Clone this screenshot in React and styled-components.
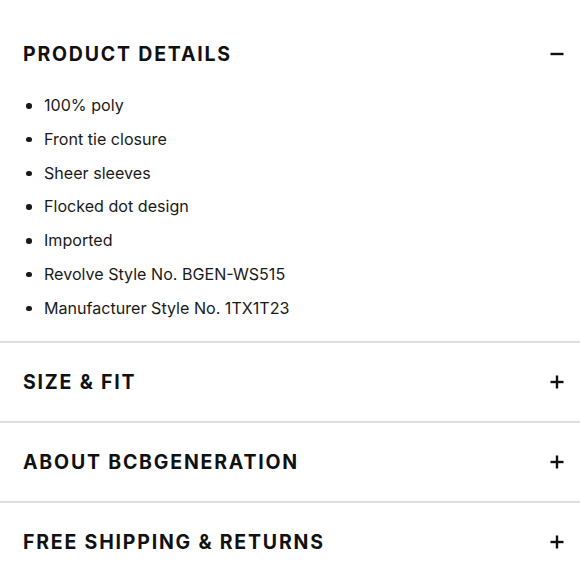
import React from "react";
import styled, { createGlobalStyle } from "styled-components";

const GlobalStyle = createGlobalStyle`
  body {
    margin: 0;
    background: #fff;
    font-family: "Inter", "Noto Sans", sans-serif;
    color: #111;
  }
`;

const Page = styled.div`
  width: 580px;
  padding-top: 20px;
`;

const Section = styled.section`
  border-top: ${(p) => (p.$first ? "none" : "2px solid #dedede")};
`;

const Header = styled.div`
  height: ${(p) => (p.$open ? "68px" : "78px")};
  display: flex;
  align-items: center;
  justify-content: space-between;
  padding: 0 16px 0 23px;
`;

const Title = styled.h2`
  margin: 0;
  font-size: 19.5px;
  font-weight: 700;
  letter-spacing: 1.8px;
  text-transform: uppercase;
`;

const List = styled.ul`
  list-style: none;
  margin: 0;
  padding: 0 0 16px 44px;
`;

const Item = styled.li`
  position: relative;
  height: 33.8px;
  line-height: 34px;
  font-size: 16.1px;
  color: #1a1a1a;

  &::before {
    content: "";
    position: absolute;
    left: -18px;
    top: 15px;
    width: 5.5px;
    height: 5.5px;
    border-radius: 50%;
    background: #1a1a1a;
  }
`;

const Toggle = ({ open }) => (
  <svg width="14" height="14" viewBox="0 0 14 14">
    <path d="M0.5 7h13" stroke="#111" strokeWidth="2.4" />
    {!open && <path d="M7 0.5v13" stroke="#111" strokeWidth="2.4" />}
  </svg>
);

const details = [
  "100% poly",
  "Front tie closure",
  "Sheer sleeves",
  "Flocked dot design",
  "Imported",
  "Revolve Style No. BGEN-WS515",
  "Manufacturer Style No. 1TX1T23",
];

const sections = ["Size & Fit", "About BCBGENERATION", "Free Shipping & Returns"];

export default function App() {
  return (
    <Page>
      <GlobalStyle />
      <Section $first>
        <Header $open>
          <Title>Product Details</Title>
          <Toggle open />
        </Header>
        <List>
          {details.map((d) => (
            <Item key={d}>{d}</Item>
          ))}
        </List>
      </Section>
      {sections.map((s) => (
        <Section key={s}>
          <Header>
            <Title>{s}</Title>
            <Toggle />
          </Header>
        </Section>
      ))}
    </Page>
  );
}
